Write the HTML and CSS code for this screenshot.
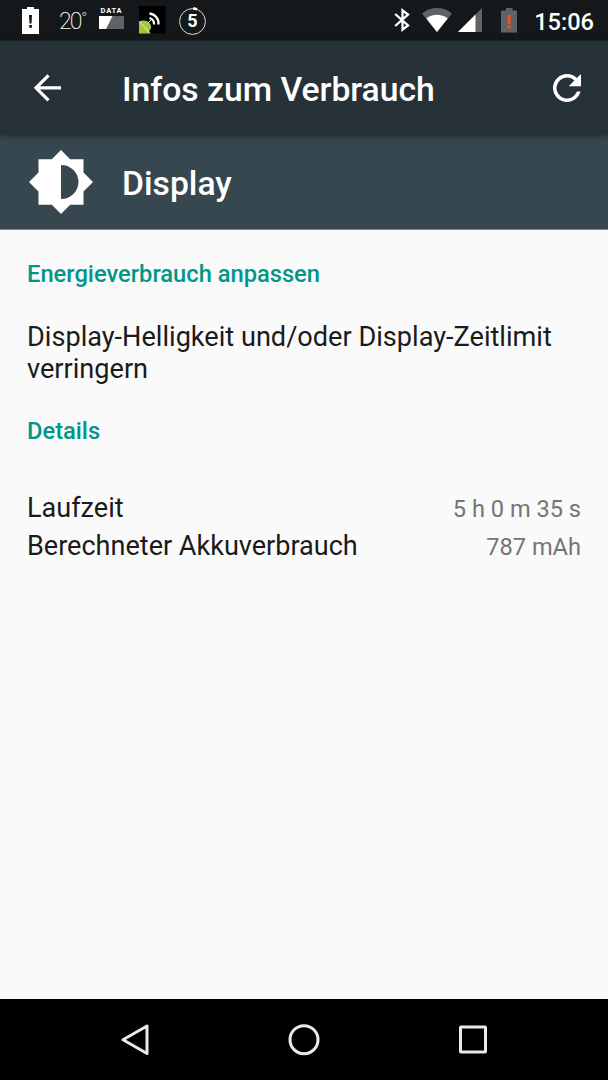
FILE: index.html
```html
<!DOCTYPE html>
<html lang="de">
<head>
<meta charset="utf-8">
<title>Infos zum Verbrauch</title>
<link rel="stylesheet" href="styles.css">
</head>
<body>
<div class="screen">
  <header class="status">
    <div class="status-group">
      <svg class="icon-notification" width="18" height="40" viewBox="0 0 18 40"><path fill="#fff" d="M0 9h5V7h7v2h5v25H0z"/><path fill="#14181a" d="M7 15h3l-.5 8.500H7.500zM7.200 25h2.700v2.700H7.200z"/></svg>
      <span class="temperature">20<span class="degree">°</span></span>
      <div class="data">
        <span class="data-label">DATA</span>
        <svg width="25" height="13" viewBox="0 0 25 13"><path fill="#606264" d="M0 0h25v13H0z"/><path fill="#fff" d="M0 0h13.500L7 13H0z"/></svg>
      </div>
      <svg class="icon-app" width="27" height="28" viewBox="0 0 27 28"><path fill="#000" d="M0 0h26.500v27.500H0z"/><g fill="none" stroke="#fff" stroke-width="2.300"><path d="M10.500 7.500a10 10 0 0 1 9 11"/><path d="M10.500 12.200a5.500 5.500 0 0 1 4.500 6.300"/></g><path fill="#a4c639" d="M0 15.500C5 13.500 9.500 15 11.500 18.500c.8 1.500.8 3 .3 4.500-1.300 1-1.800 2.500-1.300 4.500H0z"/><path d="M.5 15.500L11 27.500M9 17l3.500-3.500" stroke="#e6edd8" stroke-width="1" fill="none"/></svg>
      <div class="counter">
        <svg width="28" height="30" viewBox="0 0 28 30"><circle cx="13.500" cy="15.500" r="12.900" fill="none" stroke="#dcdddd" stroke-width="1"/><path d="M14 2.500a13 13 0 0 1 4 .7" fill="none" stroke="#fff" stroke-width="2.600"/></svg>
        <span class="counter-value">5</span>
      </div>
    </div>
    <div class="status-group">
      <svg class="icon-bluetooth" width="16" height="24" viewBox="0 0 16 24"><path fill="none" stroke="#fff" stroke-width="2.300" d="M1.200 6l12.800 11.500-5.500 4.200V2.300L14 6.500 1.200 18"/></svg>
      <svg class="icon-wifi" width="30" height="24" viewBox="0 0 30 24"><path fill="#606365" d="M0 5.500C9-1.800 21-1.800 30 5.500L15 24z"/><path fill="#fff" d="M4.300 10.500c6.200-5 15.200-5 21.400 0L15 24z"/></svg>
      <svg class="icon-signal" width="24" height="24" viewBox="0 0 24 24"><path fill="#606365" d="M24 0v24H0z"/><path fill="#fff" d="M17.500 6.500V24H0z"/></svg>
      <svg class="icon-battery" width="16" height="25" viewBox="0 0 16 25"><path fill="#606365" d="M0 2.500h5V0h6.500v2.500H16V24.500H0z"/><path fill="#f4511e" d="M6.600 7h3.200l-.4 9H7zM6.700 17.500h3v2.700h-3z"/></svg>
      <time class="clock">15:06</time>
    </div>
  </header>
  <div class="toolbar">
    <svg class="back" width="28" height="28" viewBox="0 0 28 28"><path fill="none" stroke="#fff" stroke-width="3.200" d="M27 13.800H3M14.500 1.300L2 13.800l12.500 12.500"/></svg>
    <h1 class="title">Infos zum Verbrauch</h1>
    <svg class="refresh" width="28" height="28" viewBox="4 4 16 16"><path fill="#fff" d="M17.650 6.350A7.950 7.950 0 0 0 12 4a8 8 0 1 0 7.730 10h-2.080A6 6 0 1 1 12 6c1.660 0 3.140.690 4.220 1.780L13 11h7V4z"/></svg>
  </div>
  <div class="entry">
    <svg class="brightness" width="64" height="64" viewBox="0 0 64 64"><path fill="#fff" fill-rule="evenodd" d="M54.500 22.500V9.200H41.200L32 0l-9.200 9.200H9.500v13.300L0 32l9.500 9.500v13.300h13.300L32 64l9.200-9.200h13.300V41.500L64 32zM32 49V15c9.900 0 17.500 7.600 17.500 17S41.900 49 32 49z"/></svg>
    <h2 class="title">Display</h2>
  </div>
  <main class="content">
    <h3 class="category">Energieverbrauch anpassen</h3>
    <p class="hint">Display-Helligkeit und/oder Display-Zeitlimit verringern</p>
    <h3 class="category">Details</h3>
    <div class="details">
      <div class="row"><span>Laufzeit</span><span class="value">5 h 0 m 35 s</span></div>
      <div class="row"><span>Berechneter Akkuverbrauch</span><span class="value">787 mAh</span></div>
    </div>
  </main>
  <nav class="navbar">
    <svg width="32" height="32" viewBox="0 0 32 32"><path fill="none" stroke="#e9eaea" stroke-width="3" stroke-linejoin="round" d="M28 2v27.500L4 15.700z"/></svg>
    <svg width="32" height="32" viewBox="0 0 32 32"><circle cx="16" cy="15.700" r="14" fill="none" stroke="#e9eaea" stroke-width="3"/></svg>
    <svg width="32" height="32" viewBox="0 0 32 32"><rect x="3.500" y="3" width="25" height="25" rx=".5" fill="none" stroke="#e9eaea" stroke-width="3"/></svg>
  </nav>
</div>
</body>
</html>
```

FILE: styles.css
```css
* { box-sizing: border-box; }

body {
  margin: 0;
  font-family: Roboto, sans-serif;
  background: #fafafa;
  color: #1a1b1b;
}

h1, h2, h3, p { margin: 0; }
svg { display: block; flex: none; }

.screen {
  width: 608px;
  height: 1080px;
  display: flex;
  flex-direction: column;
  overflow: hidden;
}

.status {
  flex: none;
  height: 41px;
  display: flex;
  justify-content: space-between;
  padding: 0 14px 0 22px;
  background: #14181a;
  border-bottom: 1px solid #1d2529;
  color: #fff;
}

.status-group { display: flex; align-items: flex-start; }

.temperature {
  display: flex;
  width: 39px;
  padding-left: 19px;
  font-size: 23px;
  line-height: 43px;
  font-weight: 200;
  letter-spacing: -2px;
  white-space: nowrap;
}

.degree { font-size: 16px; line-height: 38px; margin-left: 1px; }

.data {
  width: 25px;
  margin-left: 20px;
  padding-top: 7px;
  display: flex;
  flex-direction: column;
  align-items: center;
  gap: 2px;
}

.data-label {
  font-size: 7.500px;
  line-height: 7px;
  font-weight: 700;
  letter-spacing: 0.800px;
}

.icon-app { margin: 6px 0 0 15px; }

.counter {
  margin: 5px 0 0 13px;
  display: grid;
  place-items: center;
}

.counter > * { grid-area: 1 / 1; }

.counter-value {
  padding-right: 1px;
  font-size: 18px;
  line-height: 31px;
  font-weight: 700;
}

.icon-bluetooth { margin-top: 8px; }
.icon-wifi { margin: 8px 0 0 12px; }
.icon-signal { margin: 8px 0 0 6px; }
.icon-battery { margin: 8px 0 0 19px; }

.clock {
  margin-left: 17px;
  font-size: 23.600px;
  line-height: 44px;
  font-weight: 500;
}

.toolbar {
  position: relative;
  flex: none;
  height: 94px;
  display: flex;
  align-items: center;
  padding: 0 27px 0 34px;
  background: #263238;
  box-shadow: 0 1px 6px rgba(0, 0, 0, 0.400);
}

.title {
  font-size: 33.700px;
  line-height: 40px;
  font-weight: 500;
  color: #fff;
}

.toolbar .title { flex: 1; margin-left: 60px; padding-top: 4px; }

.entry {
  flex: none;
  height: 95px;
  display: flex;
  align-items: center;
  gap: 29px;
  padding-left: 29px;
  background: #37474f;
  border-bottom: 1px solid #7d888d;
}

.entry .title { padding-top: 4px; }

.content { flex: 1; padding: 0 27px; }

.category {
  padding-top: 28px;
  font-size: 23.700px;
  line-height: 32px;
  font-weight: 500;
  color: #009688;
}

.hint {
  padding-top: 31px;
  padding-bottom: 2px;
  font-size: 27.130px;
  line-height: 32px;
}

.details { padding-top: 42px; }

.row {
  display: flex;
  justify-content: space-between;
  align-items: baseline;
  height: 38px;
  font-size: 27.050px;
  line-height: 38px;
}

.value { font-size: 23.600px; color: #757575; }

.navbar {
  flex: none;
  height: 81px;
  display: flex;
  justify-content: center;
  align-items: center;
  gap: 137px;
  background: #000;
}
```
